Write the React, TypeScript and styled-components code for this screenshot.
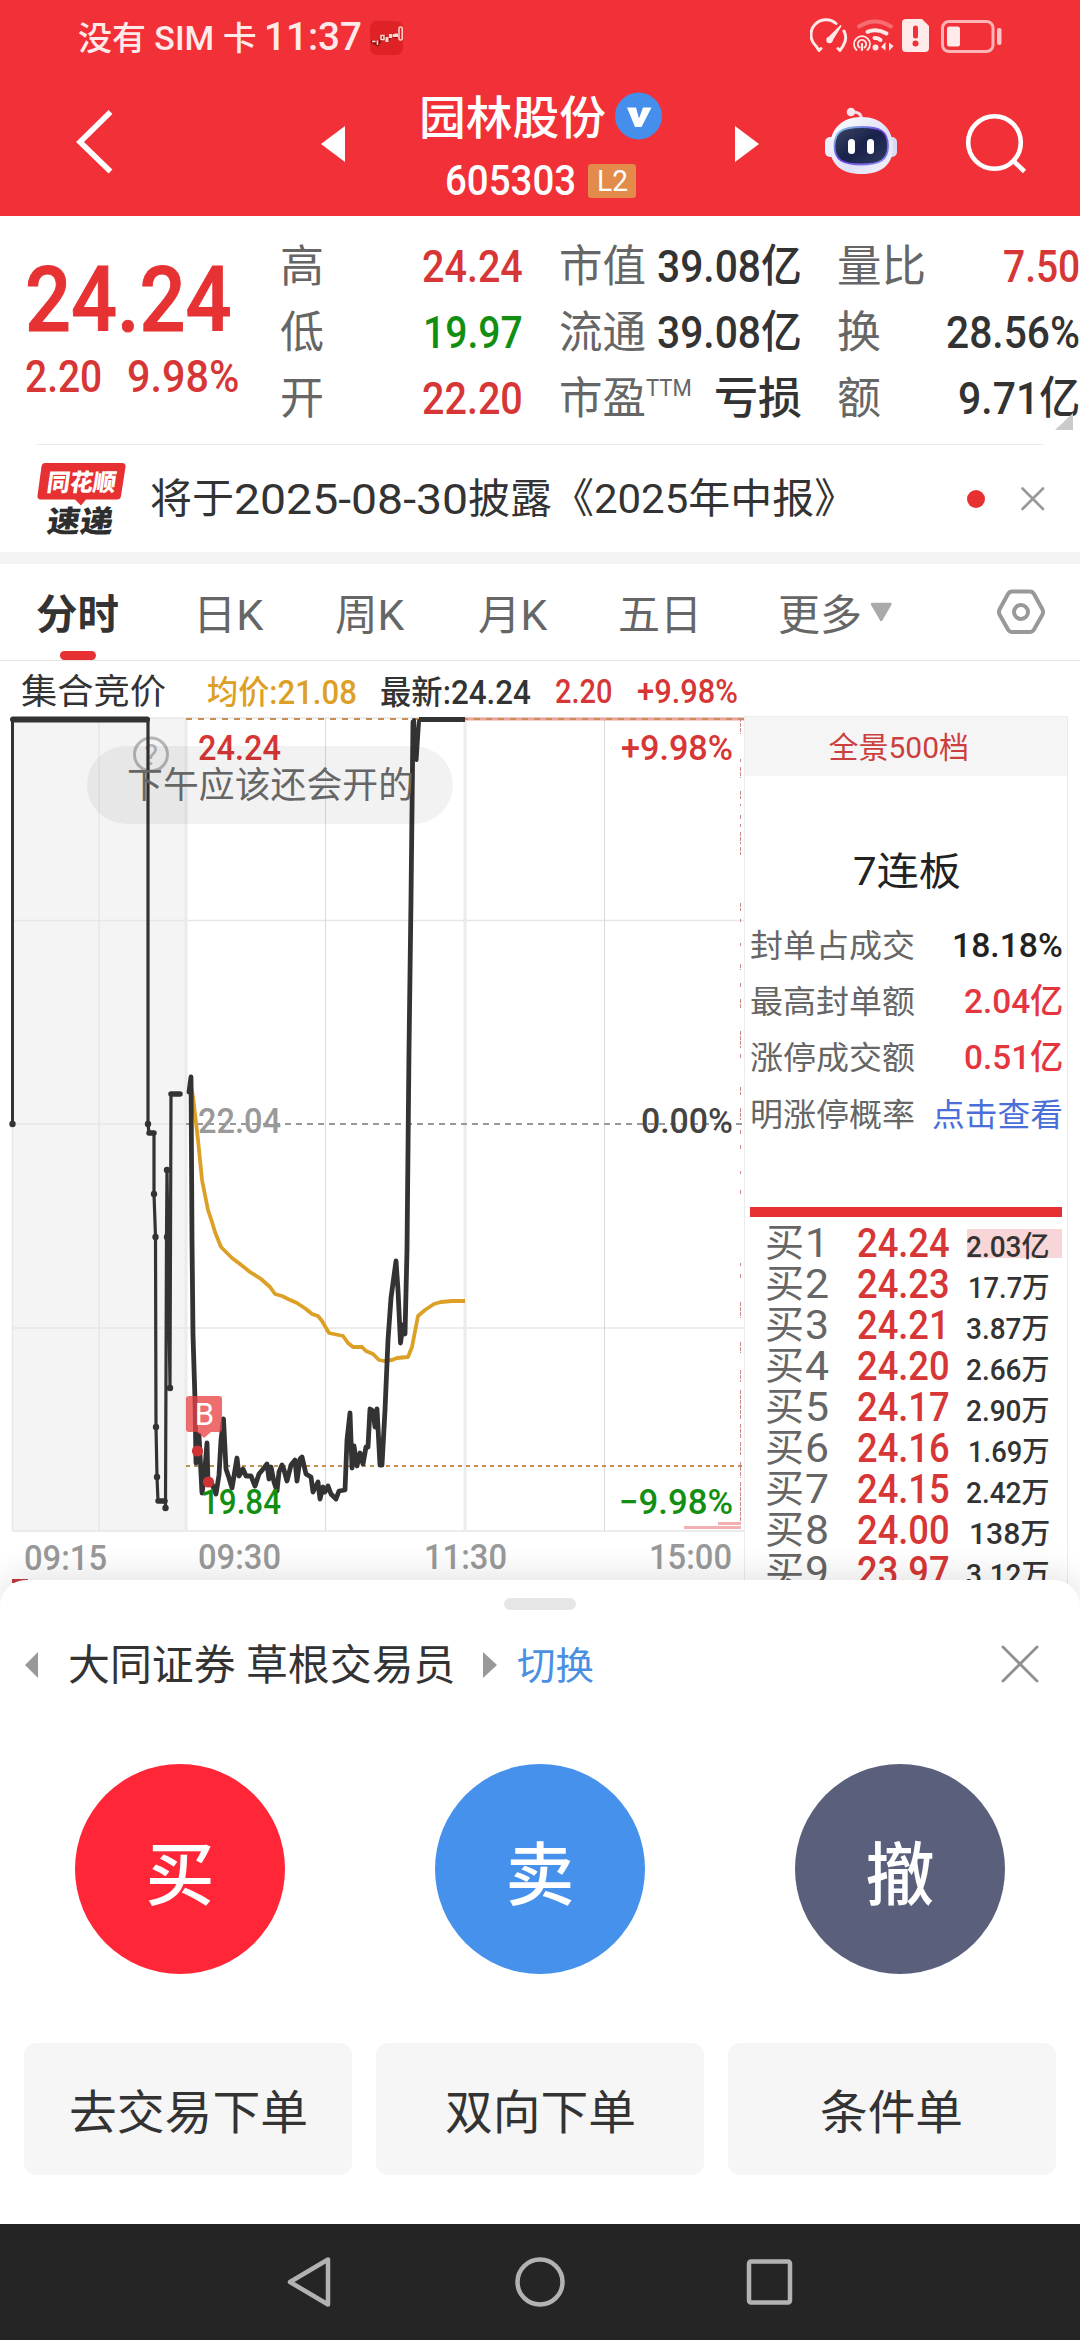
import React, { useLayoutEffect, useRef, useState } from 'react';
import styled, { createGlobalStyle, css } from 'styled-components';

const FONT = `Roboto, "Noto Sans CJK SC", sans-serif`;
const RED = '#e63031';
const NUM_RED = '#d73636';
const INK = '#333333';
const GREY = '#666666';

const Global = createGlobalStyle`
  * { box-sizing: border-box; }
  body { margin: 0; background: #fff; font-family: ${FONT}; color: ${INK}; text-spacing-trim: space-all; }
  svg { display: block; flex: none; }
  svg text { font-family: ${FONT}; }
`;

const FitBox = styled.span<{ $w: number; $size: number; $weight?: number; $color?: string; $ml?: number }>`
  display: block;
  flex: none;
  width: ${p => p.$w}px;
  height: ${p => p.$size}px;
  margin-left: ${p => p.$ml ?? 0}px;
  font-size: ${p => p.$size}px;
  line-height: 1;
  font-weight: ${p => p.$weight ?? 400};
  color: ${p => p.$color ?? 'inherit'};
  white-space: nowrap;
`;
const FitInner = styled.span`
  display: inline-block;
  transform-origin: 0 50%;
`;

type FitProps = { w: number; size: number; weight?: number; color?: string; ml?: number; children: string };
function Fit({ w, size, weight, color, ml, children }: FitProps) {
  const ref = useRef<HTMLSpanElement>(null);
  const [k, setK] = useState(1);
  useLayoutEffect(() => {
    if (ref.current) {
      const natural = ref.current.offsetWidth;
      if (natural) setK(w / natural);
    }
  }, [w, children]);
  /* Han glyphs sit a little higher than Latin capitals on the shared baseline */
  const drop = /^[^\x00-\x7f]/.test(children) ? 0.03 : 0;
  return (
    <FitBox $w={w} $size={size} $weight={weight} $color={color} $ml={ml}>
      <FitInner ref={ref} style={{ transform: `translateY(${drop}em) scaleX(${k})` }}>{children}</FitInner>
    </FitBox>
  );
}

const Screen = styled.div`
  width: 1080px;
  height: 2340px;
  display: flex;
  flex-direction: column;
  overflow: hidden;
  background: #fff;
`;

/* ---------- top ---------- */
const StatusBar = styled.div`
  height: 75px;
  flex: none;
  display: flex;
  align-items: center;
  padding-left: 78px;
  background: #f23037;
  color: #ffe9e9;
`;
const AppBadge = styled.svg`
  margin-left: 8px;
`;
const StatusIcons = styled.svg`
  margin-left: auto;
`;
const Header = styled.header`
  height: 141px;
  flex: none;
  display: flex;
  background: #f23037;
  color: #fff;
`;
const HeaderIcon = styled.svg<{ $ml: number }>`
  margin-left: ${p => p.$ml}px;
`;
const TitleBlock = styled.div`
  width: 246px;
  margin-left: 71px;
  padding-top: 17px;
`;
const TitleLine = styled.div`
  display: flex;
  align-items: center;
  height: 50px;
`;
const CodeLine = styled(TitleLine)`
  height: 42px;
  margin-top: 18px;
  padding-left: 26px;
`;
const LevelBadge = styled.span`
  width: 48px;
  height: 34px;
  margin-left: 12px;
  display: flex;
  align-items: center;
  justify-content: center;
  border-radius: 3px;
  background: #e28b4b;
`;

/* ---------- quote ---------- */
const Quote = styled.section`
  height: 228px;
  flex: none;
  display: flex;
  position: relative;
`;
const PriceBlock = styled.div`
  width: 280px;
  padding: 40px 0 0 25px;
`;
const BigPrice = styled.div`
  -webkit-text-stroke: 1px #e63233;
`;
const ChangeLine = styled.div`
  display: flex;
  margin-top: 8px;
`;
const StatGroup = styled.div<{ $ml?: number }>`
  width: 243px;
  margin-left: ${p => p.$ml ?? 0}px;
  padding-top: 17px;
`;
const StatRow = styled.div`
  height: 66px;
  display: flex;
  align-items: center;
  justify-content: space-between;
`;
const LabelWithMark = styled.div`
  display: flex;
`;
const Corner = styled.i`
  position: absolute;
  left: 1055px;
  top: 197px;
  border-left: 18px solid transparent;
  border-bottom: 17px solid #cbcbcb;
`;
const Hairline = styled.div`
  height: 1px;
  flex: none;
  margin: 0 36px;
  background: #ebebeb;
`;
const Notice = styled.div`
  height: 107px;
  flex: none;
  display: flex;
  align-items: center;
  padding-left: 35px;
`;
const NoticeText = styled.div`
  display: flex;
  margin-left: 23px;
  padding-top: 2px;
`;
const Dot = styled.i`
  width: 18px;
  height: 18px;
  margin-left: 111px;
  border-radius: 50%;
  background: ${RED};
`;
const Band = styled.div`
  height: 12px;
  flex: none;
  background: #f4f4f4;
`;

/* ---------- tabs ---------- */
const Tabs = styled.nav`
  height: 97px;
  flex: none;
  display: flex;
  padding-left: 36px;
  border-bottom: 1px solid #e4e4e4;
`;
const Tab = styled.div<{ $ml?: number; $active?: boolean }>`
  position: relative;
  height: 96px;
  margin-left: ${p => p.$ml ?? 0}px;
  padding-top: 30px;
  color: ${p => (p.$active ? INK : GREY)};
  ${p => p.$active && css`
    &::after {
      content: '';
      position: absolute;
      left: 24px;
      bottom: 0;
      width: 36px;
      height: 9px;
      border-radius: 5px;
      background: ${RED};
    }
  `}
`;
const Summary = styled.div`
  height: 55px;
  flex: none;
  display: flex;
  align-items: center;
  padding: 5px 0 0 21px;
`;

/* ---------- chart and order book ---------- */
const Board = styled.div`
  position: relative;
  height: 900px;
  flex: none;
  display: flex;
`;
const Toast = styled.div`
  position: absolute;
  left: 87px;
  top: 30px;
  width: 366px;
  height: 78px;
  display: flex;
  align-items: center;
  padding-left: 40px;
  border-radius: 39px;
  background: rgba(0, 0, 0, 0.05);
`;
const Side = styled.aside`
  width: 324px;
  border: 1px solid #ececec;
`;
const SideHead = styled.div`
  height: 59px;
  display: flex;
  align-items: center;
  justify-content: center;
  padding: 1px 14px 0 0;
  background: #f5f5f5;
`;
const Streak = styled.div`
  height: 141px;
  padding: 77px 0 0 108px;
`;
const FactRow = styled.div`
  height: 56.2px;
  display: flex;
  align-items: center;
  justify-content: space-between;
  padding: 0 4px 0 5px;
`;
const RedBar = styled.div`
  height: 10px;
  margin: 65px 5px 6px;
  background: ${RED};
`;
const BookRow = styled.div`
  height: 41px;
  display: flex;
  align-items: center;
  padding-left: 20px;
`;
const BookLabel = styled.div`
  display: flex;
  width: 92px;
`;
const Amount = styled.div<{ $hot?: boolean }>`
  width: 95px;
  height: 29px;
  display: flex;
  align-items: center;
  justify-content: flex-end;
  margin-left: 17px;
  padding: 9px 12px 0 0;
  background: ${p => (p.$hot ? '#f8d5d6' : 'transparent')};
`;

/* ---------- trading sheet ---------- */
const Sheet = styled.section`
  position: relative;
  height: 644px;
  flex: none;
  margin-top: -36px;
  border-radius: 26px 26px 0 0;
  background: #fff;
  box-shadow: 0 -8px 30px rgba(0, 0, 0, 0.1);
`;
const Handle = styled.div`
  width: 72px;
  height: 12px;
  margin: 0 auto;
  border-radius: 6px;
  background: #e6e6e6;
`;
const SheetTop = styled.div`
  height: 30px;
  padding-top: 18px;
`;
const AccountRow = styled.div`
  height: 110px;
  display: flex;
  align-items: center;
  padding-left: 25px;
`;
const SheetClose = styled.svg`
  margin-left: auto;
  margin-right: 40px;
`;
const Actions = styled.div`
  display: flex;
  justify-content: space-around;
  padding-top: 44px;
`;
const Round = styled.button<{ $bg: string }>`
  width: 210px;
  height: 210px;
  display: flex;
  align-items: center;
  justify-content: center;
  padding: 10px 0 0;
  border: 0;
  border-radius: 50%;
  background: ${p => p.$bg};
  color: #fff;
  font-family: inherit;
`;
const Links = styled.div`
  display: grid;
  grid-template-columns: repeat(3, 1fr);
  gap: 24px;
  padding: 69px 24px 0;
`;
const LinkButton = styled.button`
  height: 132px;
  display: flex;
  align-items: center;
  justify-content: center;
  padding: 4px 3px 0 0;
  border: 0;
  border-radius: 12px;
  background: #f6f6f6;
  color: ${INK};
  font-family: inherit;
`;
const NavBar = styled.footer`
  height: 116px;
  flex: none;
  background: #252525;
`;

const PRE_OPEN =
  '148,719 148,1124 149,1133 154,1133 154,1194 155.5,1237 156,1427 157,1477 158,1501 165.5,1502 165.5,1508 166.5,1237 167,1170 170,1388 170.5,1240 171,1094 180,1094';
const PRE_DOTS = [[12.5, 1124], [148, 1124], [154, 1194], [155.5, 1237], [156, 1427], [157, 1477], [165.5, 1508], [167, 1237], [167, 1170], [170, 1388]];
const PRICE =
  '189,1092 191,1077 192,1240 193,1335 195,1400 196,1463 199,1435 202,1493 204,1480 207,1443 208,1484 212,1484 216,1494 219,1475 221,1440 223.5,1419 226,1469 229,1478 232,1488 235,1470 237,1458 239,1476 243,1469 246,1476 251,1476 255,1486 259,1474 264,1468 267,1464 269,1479 271,1467 274,1482 277,1491 279,1472 282,1465 284,1470 287,1481 291,1465 295,1460 297,1481 300,1459 302,1457 306,1474 311,1477 313,1492 318,1482 320,1499 323,1487 325,1492 328,1486 331,1494 336,1499 339,1491 345,1490 347,1440 350,1413 352,1468 354,1446 357,1466 360,1453 363,1464 366,1447 368,1447 370,1409 373,1411 375,1427 377,1409 380,1465 382,1465 385,1410 388,1340 391,1298 396,1261 398,1290 400.5,1343 403,1325 405,1334 407,1250 409,1050 411,900 413,722';
const AVERAGE =
  '191,1085 193,1097 198,1140 202,1180 208,1210 212,1222 215,1232 221,1247 232,1258 240,1264 250,1272 261,1279 270,1287 275,1294 282,1296 288,1299 297,1303 306,1309 312,1314 318,1316 322,1321 329,1333 343,1336 348,1343 353,1347 362,1347 366,1351 373,1354 379,1360 384,1361 392,1360 397,1358 408,1357 412,1347 418,1316 425,1310 434,1304 441,1302 452,1301 465,1301';
const VOL_DASHES = [[718, 734], [759, 762], [767, 778], [791, 799], [804, 806], [815, 819], [824, 827], [832, 844], [847, 855], [903, 911], [919, 922], [943, 946], [964, 970], [983, 987], [999, 1008], [1031, 1048], [1054, 1059], [1087, 1095], [1108, 1120], [1130, 1134], [1145, 1149], [1171, 1174], [1190, 1194], [1263, 1266], [1274, 1278], [1302, 1318], [1342, 1353], [1370, 1382], [1390, 1420], [1424, 1438], [1442, 1455], [1462, 1478], [1482, 1525]];

function Chart() {
  return (
    <svg width="744" height="900" viewBox="0 716 744 900">
      <rect x="12" y="718" width="174" height="813" fill="#f4f4f4" />
      <g stroke="#e6e6e6" strokeWidth="1.5" fill="none">
        <path d="M12 718H744M12 920.5H744M12 1124H186M12 1328H744M12 1531H744M12.5 718V1531M99 718V1531" />
        <path d="M186 718V1531M465 718V1531" strokeWidth="3" stroke="#ebebeb" />
        <path d="M325.5 718V1531M604.5 718V1531" stroke="#dadada" strokeWidth="1" />
      </g>
      <path d="M465 719H744" stroke="#efa3a0" strokeWidth="3" />
      <path d="M186 719H744" stroke="#c58f55" strokeWidth="2" strokeDasharray="6 6" />
      <path d="M186 1466H744" stroke="#c58f55" strokeWidth="2" strokeDasharray="4 4" />
      <path d="M186 1124H744" stroke="#999" strokeWidth="1.8" strokeDasharray="6 5" />
      <g stroke="#c98a88" strokeWidth="1">
        {VOL_DASHES.map(([a, b]) => <path key={a} d={`M740.5 ${a}V${b}`} strokeDasharray="4 1" />)}
      </g>
      <path d="M718 1523.5H741M684 1527.5H741" stroke="#f2b0b0" strokeWidth="3" />
      <path d="M12 1581H28" stroke="#c03a3a" strokeWidth="4" />

      <circle cx="151" cy="754.5" r="16.5" fill="none" stroke="#b5b5b5" strokeWidth="3" />
      <text x="151" y="765" fontSize="29" fill="#b5b5b5" textAnchor="middle">?</text>

      <g fontSize="35" fontWeight="500">
        <text x="198" y="760" fill={NUM_RED} textLength="83" lengthAdjust="spacingAndGlyphs">24.24</text>
        <text x="621" y="760" fill={NUM_RED} textLength="112" lengthAdjust="spacingAndGlyphs">+9.98%</text>
        <text x="198" y="1133" fill="#999" textLength="83" lengthAdjust="spacingAndGlyphs">22.04</text>
        <text x="641" y="1133" fill="#444" textLength="92" lengthAdjust="spacingAndGlyphs">0.00%</text>
        <text x="24" y="1570" fill="#999" textLength="83" lengthAdjust="spacingAndGlyphs">09:15</text>
        <text x="198" y="1569" fill="#999" textLength="83" lengthAdjust="spacingAndGlyphs">09:30</text>
        <text x="424" y="1569" fill="#999" textLength="83" lengthAdjust="spacingAndGlyphs">11:30</text>
        <text x="649" y="1569" fill="#999" textLength="83" lengthAdjust="spacingAndGlyphs">15:00</text>
      </g>

      <polyline points={AVERAGE} fill="none" stroke="#dda027" strokeWidth="3.8" strokeLinejoin="round" />
      <g fill="none" stroke="#333" strokeLinejoin="round" strokeLinecap="round">
        <path d="M12.5 719V1124" strokeWidth="3" />
        <polyline points={PRE_OPEN} strokeWidth="3.2" />
        <path d="M13 719.5H147" strokeWidth="6" />
        <path d="M149 1133H154M171 1094H180M158 1501H165" strokeWidth="5.5" />
        <polyline points={PRICE} strokeWidth="4.8" />
        <path d="M414 720L416.5 760L419 721" strokeWidth="4" />
        <path d="M419 719.5H465" strokeWidth="5" strokeLinecap="butt" />
      </g>
      {PRE_DOTS.map(([x, y], i) => <circle key={i} cx={x} cy={y} r="3.2" fill="#333" />)}

      <g fontSize="35" fontWeight="500" fill="#128f12">
        <text x="201" y="1514" textLength="80" lengthAdjust="spacingAndGlyphs">19.84</text>
        <text x="619" y="1514" textLength="114" lengthAdjust="spacingAndGlyphs">−9.98%</text>
      </g>
      <g fill="#d03335">
        <circle cx="197.5" cy="1451" r="5.6" />
        <circle cx="208.500" cy="1482" r="5.6" />
      </g>
      <path d="M189 1396h30q3 0 3 3v30q0 3-3 3h-8l-7 6-7-6h-8q-3 0-3-3v-30q0-3 3-3z" fill="#e93f40" fillOpacity="0.76" />
      <text x="204.5" y="1425" fontSize="31" fill="#fff" textAnchor="middle">B</text>
    </svg>
  );
}

const BOOK: [string, string, string, number][] = [
  ['1', '24.24', '2.03亿', 84],
  ['2', '24.23', '17.7万', 82],
  ['3', '24.21', '3.87万', 84],
  ['4', '24.20', '2.66万', 84],
  ['5', '24.17', '2.90万', 84],
  ['6', '24.16', '1.69万', 82],
  ['7', '24.15', '2.42万', 84],
  ['8', '24.00', '138万', 81],
  ['9', '23.97', '3.12万', 84],
];

export default function App() {
  return (
    <Screen>
      <Global />
      <StatusBar>
        <Fit w={179} size={33} weight={500}>没有 SIM 卡</Fit>
        <Fit w={98} size={39} weight={500} ml={7}>11:37</Fit>
        <AppBadge width="33" height="34" viewBox="0 0 33 34">
          <rect width="33" height="34" rx="7" fill="#df2226" />
          <path d="M1 20L4 22L8 24L11 18L14 15L18 19L22 14L26 16L29 12" fill="none" stroke="#8d1013" strokeWidth="2.600" />
          <g fill="none" stroke="#ffd9d2" strokeWidth="1.500">
            <path d="M2 20.500H5.500M7.500 24V19.500M11 14.500h3v4h-3z" />
            <path d="M17 16V21M20.500 13V17M24 13V16M26.500 12.500V16" strokeWidth="3" />
            <rect x="29" y="6" width="3.200" height="13" rx="1.500" />
          </g>
        </AppBadge>
        <StatusIcons width="270" height="75" viewBox="810 0 270 75" fill="none" stroke="#ffe9e9" strokeLinecap="round">
          <path d="M821 48.500L819 50.500L816 46A15 15 0 0 1 836 23.500M844 31A15 15 0 0 1 843 46L840 50.500L838 48.500" strokeWidth="3" strokeLinejoin="round" />
          <path d="M841 25.500L831.500 41L828 38.500Z" fill="#ffe9e9" strokeWidth="1.500" />
          <circle cx="829.500" cy="40" r="3.200" fill="#ffe9e9" stroke="none" />
          <path d="M859 26.500Q875 16.500 891 26.500" strokeWidth="4" opacity="0.33" />
          <path d="M867.500 31.800Q877 28 886.500 33.500" strokeWidth="4" />
          <path d="M874.500 38Q878 37.500 880.500 40" strokeWidth="4" />
          <path d="M856.500 50A8 8 0 1 1 867.500 50" strokeWidth="1.800" />
          <path d="M859.500 47.500A4.200 4.200 0 1 1 864.500 47.500" strokeWidth="1.800" />
          <path d="M862 44V50" strokeWidth="2.200" />
          <circle cx="875.500" cy="47.500" r="3" fill="#ffe9e9" stroke="none" />
          <path d="M885.500 42V50.500L881 47ZM889 42.500L893.500 46L889 51Z" fill="#ffe9e9" stroke="none" />
          <path d="M906 19h16l7 7v22q0 4-4 4h-19q-4 0-4-4v-25q0-4 4-4z" fill="#ffe9e9" stroke="none" />
          <path d="M915.500 28V36" stroke="#f23037" strokeWidth="5" />
          <circle cx="915.500" cy="43.500" r="3" fill="#f23037" stroke="none" />
          <rect x="942.500" y="21.500" width="50.500" height="30" rx="6.500" strokeWidth="3" opacity="0.72" />
          <rect x="947" y="26.500" width="13" height="20" rx="2.500" fill="#ffe9e9" stroke="none" />
          <rect x="997" y="28" width="4.500" height="17" rx="2" fill="#ffe9e9" stroke="none" opacity="0.8" />
        </StatusIcons>
      </StatusBar>

      <Header>
        <HeaderIcon $ml={72} width="45" height="141" viewBox="72 75 45 141">
          <path d="M110.500 112L80 142L110.500 171.500" fill="none" stroke="#fff" strokeWidth="5.500" />
        </HeaderIcon>
        <HeaderIcon $ml={201} width="30" height="141" viewBox="318 75 30 141">
          <path d="M321 144L345 126V162Z" fill="#fff" />
        </HeaderIcon>
        <TitleBlock>
          <TitleLine>
            <Fit w={187} size={46} weight={500}>园林股份</Fit>
            <HeaderIcon $ml={9} width="47" height="50" viewBox="0 0 47 50">
              <circle cx="23.500" cy="24" r="23.500" fill="#458eeb" />
              <path d="M12 15.500h9l3 11 4-11h8.500l-10 19.500h-6.500z" fill="#fff" />
            </HeaderIcon>
          </TitleLine>
          <CodeLine>
            <Fit w={131} size={42} weight={500}>605303</Fit>
            <LevelBadge><Fit w={31} size={29}>L2</Fit></LevelBadge>
          </CodeLine>
        </TitleBlock>
        <HeaderIcon $ml={67} width="30" height="141" viewBox="732 75 30 141">
          <path d="M759 144L735 126V162Z" fill="#fff" />
        </HeaderIcon>
        <HeaderIcon $ml={58} width="80" height="141" viewBox="820 75 80 141">
          <defs>
            <linearGradient id="shell" x1="0" y1="0" x2="1" y2="1">
              <stop offset="0" stopColor="#ffffff" />
              <stop offset="0.6" stopColor="#dfe0f6" />
              <stop offset="1" stopColor="#f4f4fb" />
            </linearGradient>
            <linearGradient id="rim" x1="0" y1="0" x2="1" y2="1">
              <stop offset="0" stopColor="#8ad8e8" />
              <stop offset="0.5" stopColor="#6b3fe0" />
              <stop offset="1" stopColor="#8a92f2" />
            </linearGradient>
            <linearGradient id="visor" x1="0" y1="0" x2="1" y2="1">
              <stop offset="0" stopColor="#3d4664" />
              <stop offset="0.5" stopColor="#18224a" />
              <stop offset="1" stopColor="#323b5f" />
            </linearGradient>
          </defs>
          <path d="M851 112Q861 111 861.500 119" fill="none" stroke="#f6dfe6" strokeWidth="3" />
          <circle cx="851" cy="112" r="4.300" fill="#f8e6ec" />
          <rect x="825" y="137" width="12" height="20" rx="5" fill="#ececfa" />
          <rect x="885" y="137" width="12" height="20" rx="5" fill="#d8daf4" />
          <path d="M861.500 117C882 117 893 130 893 147C893 164 882 174 861.500 174C841 174 830 164 830 147C830 130 841 117 861.500 117Z" fill="url(#shell)" />
          <path d="M861.500 127C880 127 888 131 888 146C888 160 880 164.500 861.500 164.500C843 164.500 834.500 160 834.500 146C834.500 131 843 127 861.500 127Z" fill="url(#visor)" stroke="url(#rim)" strokeWidth="1.800" />
          <rect x="848" y="139" width="7" height="15" rx="3.500" fill="#fff" />
          <rect x="867" y="139" width="7" height="15" rx="3.500" fill="#fff" />
        </HeaderIcon>
        <HeaderIcon $ml={60} width="72" height="141" viewBox="960 75 72 141" fill="none" stroke="#fff" strokeWidth="4.600">
          <circle cx="994.500" cy="142.500" r="26.300" />
          <path d="M1013 160.500L1024.500 171.500" />
        </HeaderIcon>
      </Header>

      <Quote>
        <PriceBlock>
          <BigPrice><Fit w={207} size={90} weight={500} color="#e63233">24.24</Fit></BigPrice>
          <ChangeLine>
            <Fit w={77} size={45} weight={500} color={NUM_RED}>2.20</Fit>
            <Fit w={112} size={45} weight={500} color={NUM_RED} ml={25}>9.98%</Fit>
          </ChangeLine>
        </PriceBlock>
        <StatGroup>
          <StatRow><Fit w={44} size={44} color={GREY}>高</Fit><Fit w={101} size={45} weight={500} color={NUM_RED}>24.24</Fit></StatRow>
          <StatRow><Fit w={44} size={44} color={GREY}>低</Fit><Fit w={100} size={45} weight={500} color="#128f12">19.97</Fit></StatRow>
          <StatRow><Fit w={44} size={44} color={GREY}>开</Fit><Fit w={101} size={45} weight={500} color={NUM_RED}>22.20</Fit></StatRow>
        </StatGroup>
        <StatGroup $ml={36}>
          <StatRow><Fit w={87} size={44} color={GREY}>市值</Fit><Fit w={145} size={45} weight={500}>39.08亿</Fit></StatRow>
          <StatRow><Fit w={87} size={44} color={GREY}>流通</Fit><Fit w={145} size={45} weight={500}>39.08亿</Fit></StatRow>
          <StatRow>
            <LabelWithMark><Fit w={87} size={44} color={GREY}>市盈</Fit><Fit w={46} size={24} color={GREY}>TTM</Fit></LabelWithMark>
            <Fit w={88} size={44} weight={500}>亏损</Fit>
          </StatRow>
        </StatGroup>
        <StatGroup $ml={35}>
          <StatRow><Fit w={89} size={44} color={GREY}>量比</Fit><Fit w={77} size={45} weight={500} color={NUM_RED}>7.50</Fit></StatRow>
          <StatRow><Fit w={44} size={44} color={GREY}>换</Fit><Fit w={134} size={45} weight={500}>28.56%</Fit></StatRow>
          <StatRow><Fit w={44} size={44} color={GREY}>额</Fit><Fit w={122} size={45} weight={500}>9.71亿</Fit></StatRow>
        </StatGroup>
        <Corner />
      </Quote>
      <Hairline />

      <Notice>
        <svg width="92" height="76" viewBox="35 460 92 76">
          <path d="M45 462h77q4 0 3.500 4l-4.500 29q-.5 3.500-4 3.500h-31l-5 6-6-6h-34q-4 0-3.500-4l4-29q.5-3.500 3.500-3.500z" fill={RED} />
          <g fontWeight="900">
            <text transform="translate(46 490) skewX(-8)" fontSize="24" fill="#fff" textLength="69" lengthAdjust="spacingAndGlyphs">同花顺</text>
            <text transform="translate(46 531) skewX(-8)" fontSize="30" fill="#2e2e2e" textLength="66" lengthAdjust="spacingAndGlyphs">速递</text>
          </g>
        </svg>
        <NoticeText>
          <Fit w={84} size={41}>将于</Fit>
          <Fit w={234} size={43}>2025-08-30</Fit>
          <Fit w={388} size={41}>披露《2025年中报》</Fit>
        </NoticeText>
        <Dot />
        <HeaderIcon $ml={36} width="24" height="24" viewBox="0 0 24 24">
          <path d="M1.500 1.500L22 22M22 1.500L1.500 22" stroke="#999" strokeWidth="2.600" strokeLinecap="round" />
        </HeaderIcon>
      </Notice>
      <Band />

      <Tabs>
        <Tab $active><Fit w={83} size={41} weight={700}>分时</Fit></Tab>
        <Tab $ml={74}><Fit w={70} size={42}>日K</Fit></Tab>
        <Tab $ml={72}><Fit w={69} size={42}>周K</Fit></Tab>
        <Tab $ml={74}><Fit w={69} size={42}>月K</Fit></Tab>
        <Tab $ml={71}><Fit w={84} size={42}>五日</Fit></Tab>
        <Tab $ml={76}><Fit w={84} size={42}>更多</Fit></Tab>
        <HeaderIcon $ml={7} width="24" height="96" viewBox="868 564 24 96">
          <path d="M871 604H889.500L880.300 620Z" fill="#aaa" stroke="#aaa" strokeWidth="2.500" strokeLinejoin="round" />
        </HeaderIcon>
        <HeaderIcon $ml={101} width="54" height="96" viewBox="993 564 54 96" fill="none" stroke="#999" strokeWidth="4" strokeLinejoin="round">
          <path d="M1011 591.500H1029Q1031.500 591.500 1033 594L1041.500 609.500Q1042.500 612 1041.500 614.500L1033 629.500Q1031.500 632 1029 632H1011Q1008.500 632 1007 629.500L998.500 614.500Q997.500 612 998.500 609.500L1007 594Q1008.500 591.500 1011 591.500Z" />
          <circle cx="1020" cy="612" r="7" />
        </HeaderIcon>
      </Tabs>
      <Summary>
        <Fit w={145} size={35}>集合竞价</Fit>
        <Fit w={150} size={33} weight={500} color="#dda027" ml={41}>均价:21.08</Fit>
        <Fit w={151} size={33} ml={23} weight={500}>最新:24.24</Fit>
        <Fit w={57} size={33} weight={500} color={NUM_RED} ml={24}>2.20</Fit>
        <Fit w={101} size={33} weight={500} color={NUM_RED} ml={25}>+9.98%</Fit>
      </Summary>

      <Board>
        <Chart />
        <Toast><Fit w={287} size={36} color={GREY}>下午应该还会开的</Fit></Toast>
        <Side>
          <SideHead><Fit w={141} size={30} color="#cc3f3f">全景500档</Fit></SideHead>
          <Streak><Fit w={108} size={39} color="#222">7连板</Fit></Streak>
          <FactRow><Fit w={165} size={32} color={GREY}>封单占成交</Fit><Fit w={111} size={34} weight={500} color="#222">18.18%</Fit></FactRow>
          <FactRow><Fit w={165} size={32} color={GREY}>最高封单额</Fit><Fit w={99} size={34} weight={500} color="#e5353e">2.04亿</Fit></FactRow>
          <FactRow><Fit w={165} size={32} color={GREY}>涨停成交额</Fit><Fit w={99} size={34} weight={500} color="#e5353e">0.51亿</Fit></FactRow>
          <FactRow><Fit w={165} size={32} color={GREY}>明涨停概率</Fit><Fit w={131} size={32} color="#4a6fd8">点击查看</Fit></FactRow>
          <RedBar />
          {BOOK.map(([n, price, amount, w], i) => (
            <BookRow key={n}>
              <BookLabel>
                <Fit w={39} size={39} color={GREY}>买</Fit>
                <Fit w={24} size={41} color={GREY} ml={1}>{n}</Fit>
              </BookLabel>
              <Fit w={93} size={41} weight={500} color={NUM_RED}>{price}</Fit>
              <Amount $hot={i === 0}><Fit w={w} size={29} weight={500}>{amount}</Fit></Amount>
            </BookRow>
          ))}
        </Side>
      </Board>

      <Sheet>
        <SheetTop><Handle /></SheetTop>
        <AccountRow>
          <svg width="14" height="28" viewBox="0 0 14 28"><path d="M0 14L13 1V27Z" fill="#999" /></svg>
          <Fit w={387} size={42} ml={29}>大同证券 草根交易员</Fit>
          <HeaderIcon $ml={28} width="14" height="28" viewBox="0 0 14 28"><path d="M14 14L0 1V27Z" fill="#999" /></HeaderIcon>
          <Fit w={77} size={38} color="#4a90e2" ml={20}>切换</Fit>
          <SheetClose width="40" height="40" viewBox="0 0 40 40">
            <path d="M3 2L37 36M37 2L3 36" stroke="#8f8f8f" strokeWidth="2.800" strokeLinecap="round" />
          </SheetClose>
        </AccountRow>
        <Actions>
          <Round $bg="#ff2637"><Fit w={69} size={69} weight={500}>买</Fit></Round>
          <Round $bg="#4691ec"><Fit w={69} size={69} weight={500}>卖</Fit></Round>
          <Round $bg="#5a607b"><Fit w={69} size={69} weight={500}>撤</Fit></Round>
        </Actions>
        <Links>
          <LinkButton><Fit w={239} size={47}>去交易下单</Fit></LinkButton>
          <LinkButton><Fit w={191} size={47}>双向下单</Fit></LinkButton>
          <LinkButton><Fit w={143} size={47}>条件单</Fit></LinkButton>
        </Links>
      </Sheet>
      <NavBar>
        <svg width="1080" height="116" viewBox="0 2224 1080 116" fill="none" stroke="#b2b2b2" strokeWidth="4.500" strokeLinejoin="round">
          <path d="M290 2282L328 2259.500V2304.500Z" />
          <circle cx="540" cy="2282" r="22.500" />
          <rect x="749" y="2261.500" width="41" height="41" rx="2" />
        </svg>
      </NavBar>
    </Screen>
  );
}
